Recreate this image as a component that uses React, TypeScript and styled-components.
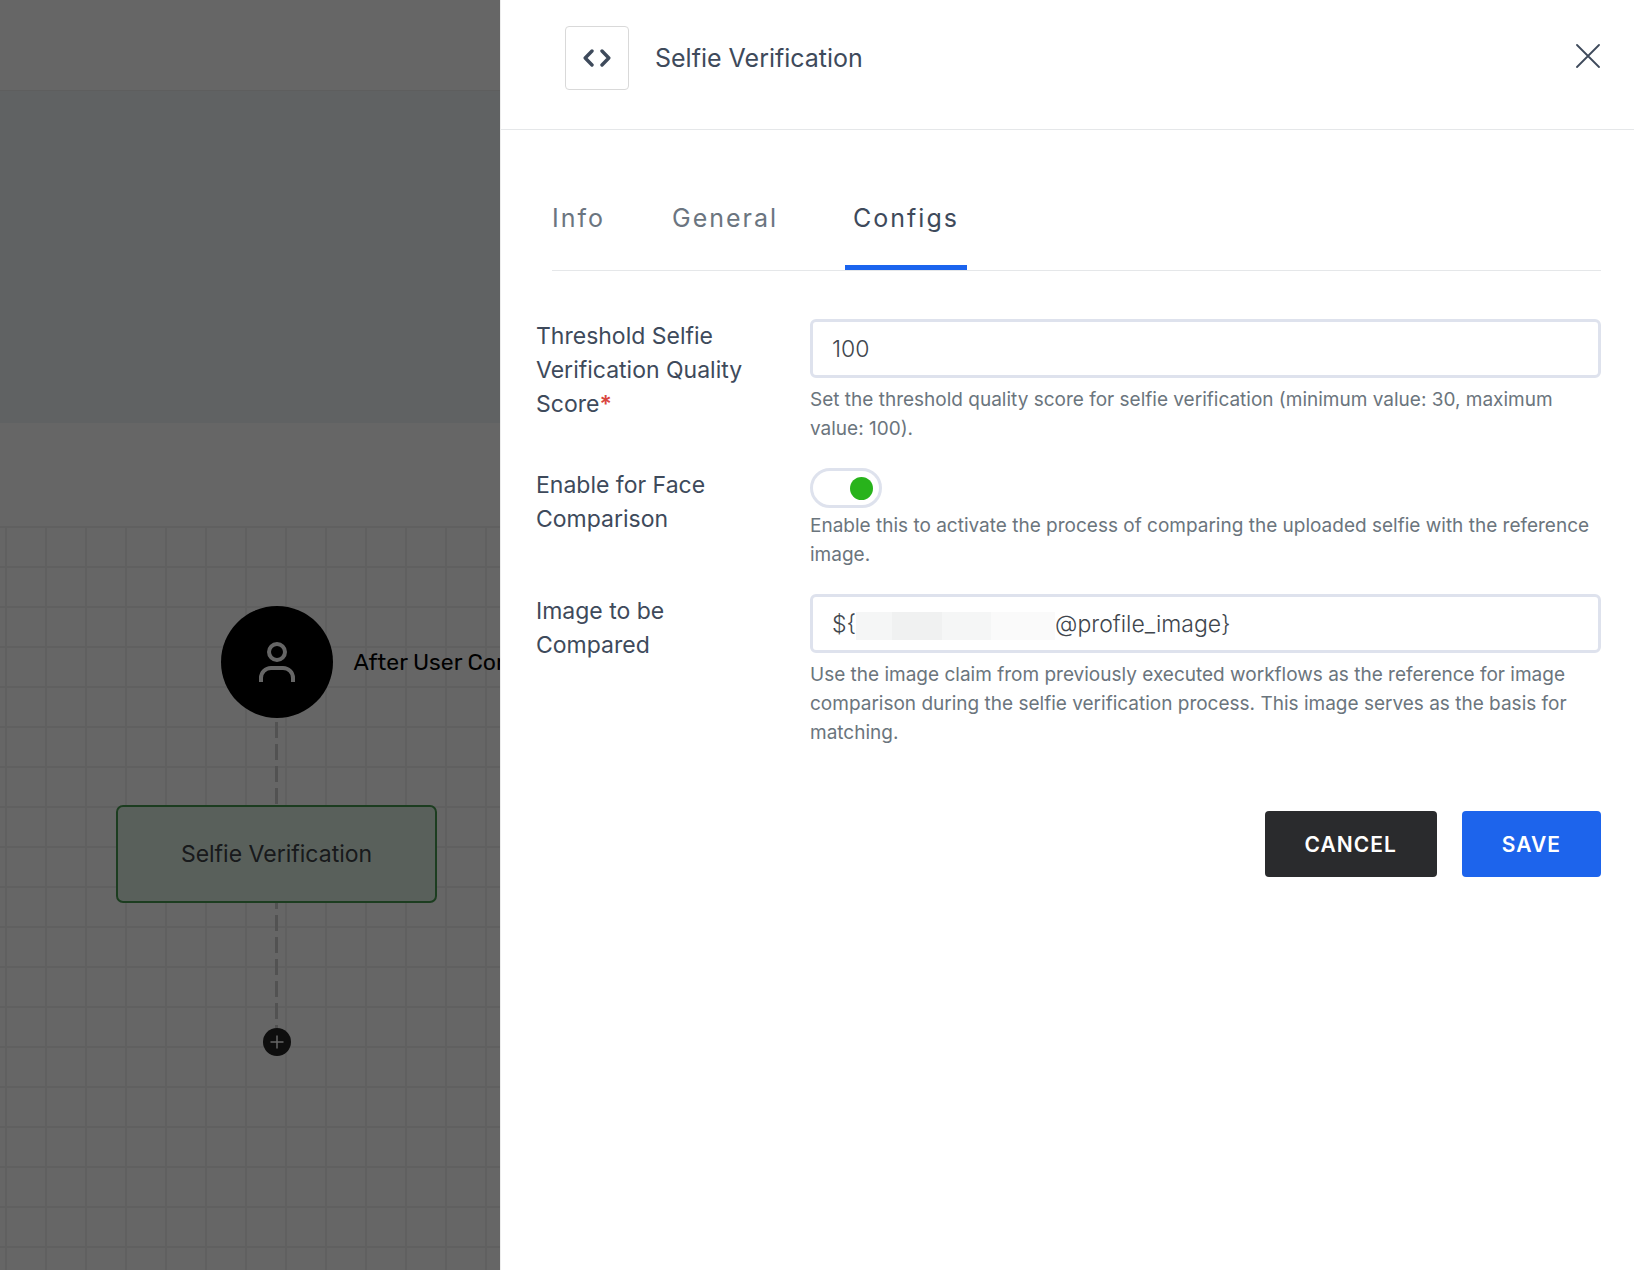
import React, { useState } from "react";
import styled, { createGlobalStyle } from "styled-components";

const GlobalStyle = createGlobalStyle`
  *, *::before, *::after { box-sizing: border-box; }
  html, body { margin: 0; background: #ffffff; }
  body, button, input { font-family: Inter, "Liberation Sans", sans-serif; }
`;

const Screen = styled.div`
  display: grid;
  grid-template-columns: 500px minmax(0, 1fr);
  min-height: 100vh;
`;

const Workspace = styled.section`
  position: relative;
  display: flex;
  flex-direction: column;
  overflow: hidden;
  background: #ffffff;
`;

const Scrim = styled.div`
  position: absolute;
  inset: 0;
  background: rgba(0, 0, 0, 0.6);
`;

const TopBar = styled.div`
  height: 91px;
  border-bottom: 1px solid #ebebeb;
`;

const Banner = styled.div`
  height: 332px;
  background: #f0f4f8;
`;

const ToolStrip = styled.div`
  height: 103px;
`;

const Canvas = styled.div`
  flex: 1;
  padding: 80px 0 0 116px;
  background-image:
    linear-gradient(#f0f0f0 2px, transparent 2px),
    linear-gradient(90deg, #f0f0f0 2px, transparent 2px);
  background-size: 40px 40px;
  background-position: 5px 0;
`;

const Flow = styled.div`
  display: flex;
  flex-direction: column;
  align-items: center;
  width: 321px;
`;

const StartNode = styled.div`
  position: relative;
  display: grid;
  place-items: center;
  width: 112px;
  height: 112px;
  border-radius: 50%;
  background: #000000;
`;

const StartLabel = styled.span`
  position: absolute;
  left: 133px;
  top: 42px;
  color: #000000;
  font: 400 23px/28px Rubik, Roboto, sans-serif;
  white-space: nowrap;
`;

const StepNode = styled.div`
  display: grid;
  place-items: center;
  width: 100%;
  height: 98px;
  border: 2px solid #489a50;
  border-radius: 7px;
  background: #def0e3;
  color: #3c4146;
  font-size: 23px;
  line-height: 34px;
`;

const AddButton = styled.button`
  display: grid;
  place-items: center;
  width: 28px;
  height: 28px;
  padding: 0;
  border: 0;
  border-radius: 50%;
  background: #232323;
`;

const Drawer = styled.aside`
  border-left: 1px solid #ededed;
  background: #ffffff;
`;

const DrawerHeader = styled.header`
  display: flex;
  align-items: flex-start;
  padding: 26px 33px 39px 64px;
  border-bottom: 1px solid #e5e7e9;
`;

const IconTile = styled.div`
  display: grid;
  place-items: center;
  width: 64px;
  height: 64px;
  border: 1px solid #d9d9d9;
  border-radius: 4px;
`;

const Title = styled.h1`
  flex: 1;
  margin: 0 0 0 26px;
  color: #3e4a5b;
  font-size: 25px;
  font-weight: 400;
  line-height: 64px;
`;

const CloseButton = styled.button`
  display: grid;
  place-items: center;
  width: 26px;
  height: 60px;
  padding: 0;
  border: 0;
  background: none;
`;

const Tabs = styled.nav`
  display: flex;
  gap: 67px;
  margin: 67px 33px 0 51px;
  border-bottom: 1px solid #e5e7e9;
`;

const Tab = styled.button<{ $active?: boolean }>`
  height: 73px;
  padding: ${(p) => (p.$active ? "0 8px 27px" : "0 0 27px")};
  border: 0;
  border-bottom: 5px solid ${(p) => (p.$active ? "#1b64ee" : "transparent")};
  background: none;
  color: ${(p) => (p.$active ? "#3e4a5b" : "#6b7580")};
  font-size: 25px;
  line-height: 40px;
  letter-spacing: 2px;
`;

const Form = styled.form`
  display: flex;
  flex-direction: column;
  gap: 25px;
  padding: 48px 33px 0 35px;
`;

const Row = styled.div`
  display: grid;
  grid-template-columns: 214px minmax(0, 1fr);
  column-gap: 60px;
`;

const Label = styled.label`
  color: #3e4a5b;
  font-size: 23px;
  line-height: 34px;
`;

const Required = styled.span`
  color: #d9463f;
  font-weight: 600;
`;

const Field = styled.div<{ $tight?: boolean }>`
  display: flex;
  flex-direction: column;
  align-items: stretch;
  gap: ${(p) => (p.$tight ? 3 : 7)}px;
`;

const InputFrame = styled.div`
  display: flex;
  align-items: center;
  height: 59px;
  padding: 0 19px;
  border: 3px solid #dee2ed;
  border-radius: 6px;
  color: #40464d;
  font-size: 23px;
  font-weight: 300;
  line-height: 34px;
`;

const Input = styled.input`
  flex: 1;
  min-width: 0;
  padding: 0;
  border: 0;
  outline: 0;
  background: none;
  color: inherit;
  font-size: inherit;
  font-weight: inherit;
  line-height: inherit;
`;

const Redaction = styled.span`
  display: flex;
  height: 28px;
  margin-top: 4px;
`;

const Block = styled.span<{ $width: number; $color: string }>`
  width: ${(p) => p.$width}px;
  background: ${(p) => p.$color};
`;

const Switch = styled.input`
  appearance: none;
  display: flex;
  align-items: center;
  width: 72px;
  height: 40px;
  margin: 0;
  padding: 0 6px;
  border: 3px solid #dee2ed;
  border-radius: 20px;

  &::before {
    content: "";
    width: 23px;
    height: 23px;
    border-radius: 50%;
    background: #a9b1bb;
  }
  &:checked {
    justify-content: flex-end;
  }
  &:checked::before {
    background: #28b31b;
  }
`;

const Help = styled.p`
  margin: 0;
  color: #6b757d;
  font-size: 19px;
  line-height: 29px;
`;

const Actions = styled.div`
  display: flex;
  justify-content: flex-end;
  gap: 25px;
  margin-top: 39px;
`;

const Button = styled.button<{ $primary?: boolean }>`
  height: 66px;
  padding: 0 40px;
  border: 0;
  border-radius: 4px;
  background: ${(p) => (p.$primary ? "#1d64ec" : "#2a2b2d")};
  color: #ffffff;
  font-size: 21px;
  font-weight: 600;
  letter-spacing: 1px;
`;

const redactedBlocks = [
  { width: 36, color: "#f5f6f6" },
  { width: 50, color: "#f0f1f1" },
  { width: 49, color: "#f5f6f6" },
  { width: 64, color: "#fafafa" },
];

function Connector({ height, offset = 0 }: { height: number; offset?: number }) {
  return (
    <svg width="3" height={height} aria-hidden="true" display="block">
      <line x1="1.5" y1="0" x2="1.5" y2={height} stroke="#cccccc" strokeWidth="3" strokeDasharray="16 6" strokeDashoffset={offset} />
    </svg>
  );
}

function WorkflowPane() {
  return (
    <Workspace>
      <TopBar />
      <Banner />
      <ToolStrip />
      <Canvas>
        <Flow>
          <StartNode>
            <svg width="38" height="42" viewBox="0 0 38 42" fill="none" stroke="#ffffff" strokeWidth="4" aria-hidden="true">
              <circle cx="19" cy="11" r="8" />
              <path d="M3 41v-4a10 10 0 0 1 10-10h12a10 10 0 0 1 10 10v4" />
            </svg>
            <StartLabel>After User Con</StartLabel>
          </StartNode>
          <Connector height={87} offset={18} />
          <StepNode>Selfie Verification</StepNode>
          <Connector height={125} offset={10} />
          <AddButton type="button" aria-label="Add step">
            <svg width="14" height="14" viewBox="0 0 14 14" stroke="#ffffff" strokeWidth="1.5" aria-hidden="true">
              <path d="M7 0.5v13M0.5 7h13" />
            </svg>
          </AddButton>
        </Flow>
      </Canvas>
      <Scrim />
    </Workspace>
  );
}

export default function App() {
  const [score, setScore] = useState("100");
  const [compare, setCompare] = useState(true);
  const [claim, setClaim] = useState("@profile_image}");

  return (
    <>
      <GlobalStyle />
      <Screen>
        <WorkflowPane />
        <Drawer>
          <DrawerHeader>
            <IconTile>
              <svg width="28" height="18" viewBox="0 0 28 18" fill="none" stroke="#3e4a5b" strokeWidth="3.4" strokeLinecap="round" strokeLinejoin="round" aria-hidden="true">
                <path d="M9 2 2.2 9 9 16M19 2l6.8 7L19 16" />
              </svg>
            </IconTile>
            <Title>Selfie Verification</Title>
            <CloseButton type="button" aria-label="Close">
              <svg width="24" height="24" viewBox="0 0 24 24" stroke="#3e4a5b" strokeWidth="1.8" strokeLinecap="round" aria-hidden="true">
                <path d="M1 1l22 22M23 1 1 23" />
              </svg>
            </CloseButton>
          </DrawerHeader>
          <Tabs>
            <Tab type="button">Info</Tab>
            <Tab type="button">General</Tab>
            <Tab type="button" $active>Configs</Tab>
          </Tabs>
          <Form onSubmit={(e) => e.preventDefault()}>
            <Row>
              <Label htmlFor="score">
                Threshold Selfie Verification Quality Score<Required>*</Required>
              </Label>
              <Field>
                <InputFrame>
                  <Input id="score" value={score} onChange={(e) => setScore(e.target.value)} />
                </InputFrame>
                <Help>Set the threshold quality score for selfie verification (minimum value: 30, maximum value: 100).</Help>
              </Field>
            </Row>
            <Row>
              <Label htmlFor="compare">Enable for Face Comparison</Label>
              <Field $tight>
                <Switch id="compare" type="checkbox" checked={compare} onChange={(e) => setCompare(e.target.checked)} />
                <Help>Enable this to activate the process of comparing the uploaded selfie with the reference image.</Help>
              </Field>
            </Row>
            <Row>
              <Label htmlFor="claim">Image to be Compared</Label>
              <Field>
                <InputFrame>
                  <span>{"${"}</span>
                  <Redaction>
                    {redactedBlocks.map((b, i) => (
                      <Block key={i} $width={b.width} $color={b.color} />
                    ))}
                  </Redaction>
                  <Input id="claim" value={claim} onChange={(e) => setClaim(e.target.value)} />
                </InputFrame>
                <Help>
                  Use the image claim from previously executed workflows as the reference for image comparison during the
                  selfie verification process. This image serves as the basis for matching.
                </Help>
              </Field>
            </Row>
            <Actions>
              <Button type="button">CANCEL</Button>
              <Button type="submit" $primary>SAVE</Button>
            </Actions>
          </Form>
        </Drawer>
      </Screen>
    </>
  );
}
